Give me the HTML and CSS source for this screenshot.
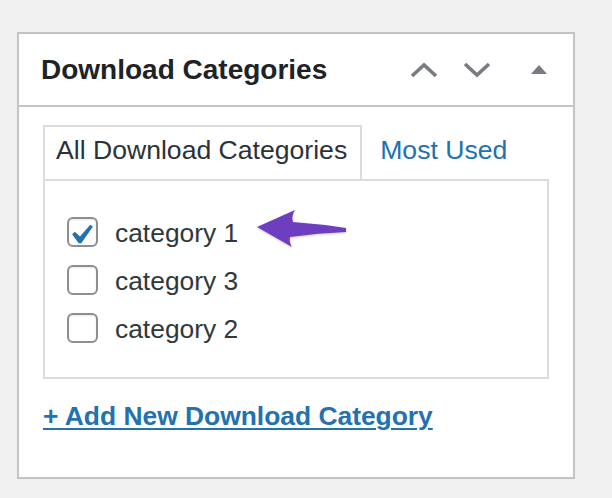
FILE: index.html
```html
<!DOCTYPE html>
<html lang="en">
<head>
<meta charset="utf-8">
<title>Download Categories</title>
<link rel="stylesheet" href="styles.css">
</head>
<body>
<div class="page">
  <div class="postbox">
    <div class="postbox-header">
      <h2 class="hndle">Download Categories</h2>
      <div class="handle-actions">
        <span class="handle-btn btn-up">
          <svg width="28" height="16" viewBox="0 0 28 16"><polyline points="2,14 14,3 26,14" fill="none" stroke="#787c82" stroke-width="3.6"/></svg>
        </span>
        <span class="handle-btn btn-down">
          <svg width="28" height="16" viewBox="0 0 28 16"><polyline points="2,2 14,13 26,2" fill="none" stroke="#787c82" stroke-width="3.6"/></svg>
        </span>
        <span class="handle-btn btn-toggle">
          <svg width="16" height="9" viewBox="0 0 16 9"><polygon points="8,0 16,9 0,9" fill="#787c82"/></svg>
        </span>
      </div>
    </div>
    <div class="inside">
      <ul class="tabs">
        <li class="tab tab-active">All Download Categories</li>
        <li class="tab tab-link">Most Used</li>
      </ul>
      <div class="panel">
        <ul class="checklist">
          <li class="item">
            <span class="cb cb-checked">
              <svg width="27" height="26" viewBox="4.45 2.05 13 13"><path d="M14.83 4.89l1.34.94-5.81 8.38H9.02L5.78 9.67l1.34-1.25 2.57 2.4z" fill="#2271b1"/></svg>
            </span>
            <span class="label">category 1</span>
          </li>
          <li class="item">
            <span class="cb"></span>
            <span class="label">category 3</span>
          </li>
          <li class="item">
            <span class="cb"></span>
            <span class="label">category 2</span>
          </li>
        </ul>
      </div>
      <p class="add-new-wrap"><a class="add-new" href="#">+ Add New Download Category</a></p>
    </div>
  </div>
  <svg class="annotation" width="120" height="60" viewBox="0 0 120 60">
    <path d="M17,27 L55,10 Q51,16 53,22 Q80,24 106,28 L106,32 Q78,33 50,37 Q49,42 52,47 Z" fill="#6d3fc0"/>
  </svg>
</div>
</body>
</html>
```

FILE: styles.css
```css
html, body {
  margin: 0;
  padding: 0;
}

body {
  background: #f0f0f1;
  font-family: "Liberation Sans", Arial, sans-serif;
}

.page {
  position: relative;
  box-sizing: border-box;
  height: 498px;
  padding: 32px 0 0 17px;
}

.postbox {
  box-sizing: border-box;
  width: 558px;
  background: #fff;
  border: 2px solid #c3c4c7;
}

.postbox-header {
  display: flex;
  align-items: center;
  height: 71px;
  padding: 0 26px 0 22px;
  border-bottom: 2px solid #c3c4c7;
}

.hndle {
  flex: 1;
  margin: 0;
  font-size: 28px;
  font-weight: 700;
  line-height: 71px;
  color: #1d2327;
}

.handle-actions {
  display: flex;
  align-items: center;
}

.handle-btn {
  display: flex;
  align-items: center;
}

.handle-btn svg {
  display: block;
}

.btn-down {
  margin-left: 25px;
}

.btn-toggle {
  margin-left: 40px;
}

.inside {
  padding: 18px 24px 46px 24px;
}

.tabs {
  display: flex;
  align-items: flex-start;
  margin: 0;
  padding: 0;
  list-style: none;
  font-size: 26.6px;
  line-height: 30px;
}

.tab {
  height: 30px;
  white-space: nowrap;
}

.tab-active {
  position: relative;
  z-index: 1;
  margin-bottom: -2px;
  padding: 8px 13px 14px 11px;
  background: #fff;
  border: 2px solid #dcdcde;
  border-bottom: none;
  color: #2c3338;
}

.tab-link {
  padding: 8px 10px 14px 18px;
  border-top: 2px solid transparent;
  color: #2271b1;
}

.panel {
  padding: 36px 22px 34px 22px;
  border: 2px solid #dcdcde;
  background: #fff;
}

.checklist {
  display: flex;
  flex-direction: column;
  gap: 18px;
  margin: 0;
  padding: 0;
  list-style: none;
}

.item {
  display: flex;
  align-items: center;
  height: 30px;
}

.cb {
  box-sizing: border-box;
  flex-shrink: 0;
  width: 31px;
  height: 30px;
  border: 2px solid #8c8f94;
  border-radius: 6px;
  background: #fff;
  box-shadow: inset 0 1px 2px rgba(0, 0, 0, 0.1);
}

.cb svg {
  display: block;
}

.label {
  margin-left: 17px;
  padding-top: 2px;
  font-size: 26.4px;
  line-height: 28px;
  color: #32373c;
}

.add-new-wrap {
  margin: 22px 0 0 0;
  height: 30px;
  font-size: 26.4px;
  line-height: 30px;
}

.add-new {
  font-weight: 700;
  color: #2271b1;
  text-decoration: underline;
  text-decoration-thickness: 2px;
  text-underline-offset: 3px;
}

.annotation {
  position: absolute;
  left: 240px;
  top: 200px;
  filter: drop-shadow(0 1px 1px rgba(60, 30, 110, 0.25));
}
```
